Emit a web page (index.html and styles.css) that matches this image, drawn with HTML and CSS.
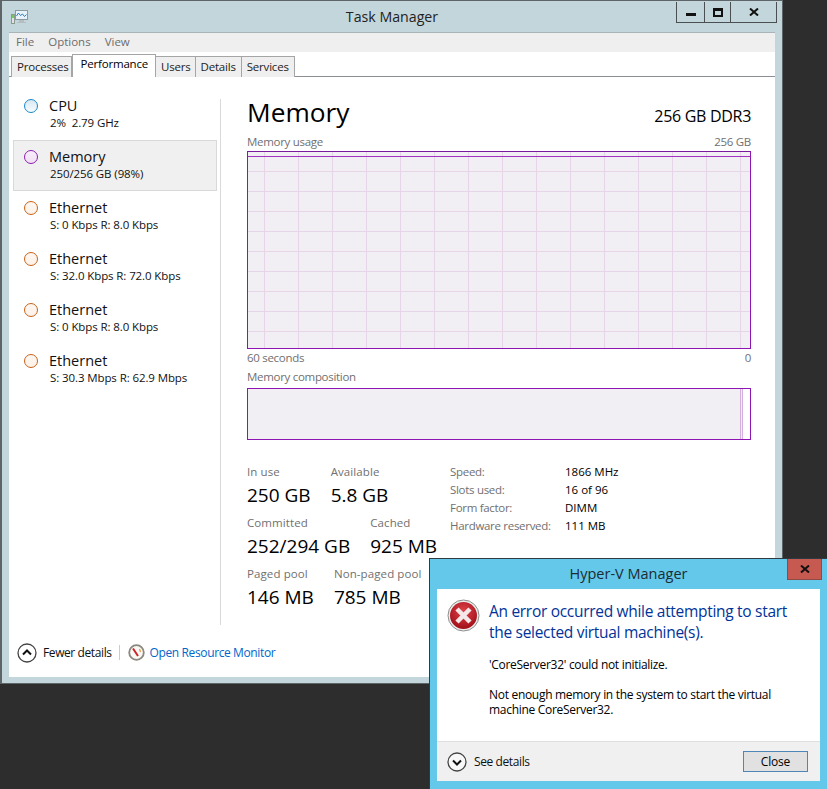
FILE: index.html
```html
<!DOCTYPE html>
<html>
<head>
    <title>Task Manager</title>
    <link rel="stylesheet" href="styles.css">
</head>
<body>
    <div class="window">
        <div class="titlebar">
            <svg class="app-icon" width="17" height="15" viewBox="0 0 17 15">
                <rect x="4.500" y="0.500" width="12" height="9" fill="#e8f2f8" stroke="#8a9aa5"/>
                <path d="M5.500 6l2-3 2 2.500 2-1.500 2 2.500 2-2" fill="none" stroke="#2a7fc0"/>
                <rect x="0.500" y="4.500" width="3" height="9" fill="#dfe5e5" stroke="#8a9a90"/>
                <rect x="1" y="5" width="2" height="3" fill="#6fce5a"/>
                <path d="M8 10h5v2h2v1H6v-1h2z" fill="#b3bdc2"/>
            </svg>
            <div class="window-title">Task Manager</div>
            <div class="caption-buttons">
                <div class="caption-btn min"><span class="min-glyph"></span></div>
                <div class="caption-btn max"><span class="max-glyph"></span></div>
                <div class="caption-btn close">
                    <svg width="10" height="8" viewBox="0 0 10 8"><path d="M1 .5l8 7M9 .5l-8 7" fill="none" stroke="#111" stroke-width="2"/></svg>
                </div>
            </div>
        </div>

        <div class="client">
            <div class="menu">
                <span class="menu-item">File</span>
                <span class="menu-item">Options</span>
                <span class="menu-item">View</span>
            </div>
            <div class="tabs">
                <div class="tab">Processes</div>
                <div class="tab active">Performance</div>
                <div class="tab">Users</div>
                <div class="tab">Details</div>
                <div class="tab">Services</div>
            </div>

            <div class="main">
                <div class="sidebar">
                    <div class="side-item">
                        <span class="dot blue"></span>
                        <div>
                            <div class="side-name">CPU</div>
                            <div class="side-sub">2%&nbsp; 2.79 GHz</div>
                        </div>
                    </div>
                    <div class="side-item selected">
                        <span class="dot purple"></span>
                        <div>
                            <div class="side-name">Memory</div>
                            <div class="side-sub">250/256 GB (98%)</div>
                        </div>
                    </div>
                    <div class="side-item">
                        <span class="dot orange"></span>
                        <div>
                            <div class="side-name">Ethernet</div>
                            <div class="side-sub">S: 0 Kbps R: 8.0 Kbps</div>
                        </div>
                    </div>
                    <div class="side-item">
                        <span class="dot orange"></span>
                        <div>
                            <div class="side-name">Ethernet</div>
                            <div class="side-sub">S: 32.0 Kbps R: 72.0 Kbps</div>
                        </div>
                    </div>
                    <div class="side-item">
                        <span class="dot orange"></span>
                        <div>
                            <div class="side-name">Ethernet</div>
                            <div class="side-sub">S: 0 Kbps R: 8.0 Kbps</div>
                        </div>
                    </div>
                    <div class="side-item">
                        <span class="dot orange"></span>
                        <div>
                            <div class="side-name">Ethernet</div>
                            <div class="side-sub">S: 30.3 Mbps R: 62.9 Mbps</div>
                        </div>
                    </div>
                </div>

                <div class="detail">
                    <div class="detail-head">
                        <div class="detail-title">Memory</div>
                        <div class="detail-type">256 GB DDR3</div>
                    </div>
                    <div class="chart-label usage">
                        <span>Memory usage</span>
                        <span>256 GB</span>
                    </div>
                    <div class="chart"><div class="chart-grid"></div></div>
                    <div class="chart-label axis">
                        <span>60 seconds</span>
                        <span>0</span>
                    </div>
                    <div class="chart-label comp-label">
                        <span>Memory composition</span>
                    </div>
                    <div class="composition">
                        <div class="comp-used"></div>
                        <div class="comp-mod"></div>
                        <div class="comp-free"></div>
                    </div>

                    <div class="stats">
                        <div class="stats-left">
                            <div class="stat-row">
                                <div><div class="stat-label">In use</div><div class="stat-value">250 GB</div></div>
                                <div><div class="stat-label">Available</div><div class="stat-value">5.8 GB</div></div>
                            </div>
                            <div class="stat-row">
                                <div><div class="stat-label">Committed</div><div class="stat-value">252/294 GB</div></div>
                                <div><div class="stat-label">Cached</div><div class="stat-value">925 MB</div></div>
                            </div>
                            <div class="stat-row">
                                <div><div class="stat-label">Paged pool</div><div class="stat-value">146 MB</div></div>
                                <div><div class="stat-label">Non-paged pool</div><div class="stat-value">785 MB</div></div>
                            </div>
                        </div>
                        <div class="spec-table">
                            <span class="spec-label">Speed:</span><span class="spec-value">1866 MHz</span>
                            <span class="spec-label">Slots used:</span><span class="spec-value">16 of 96</span>
                            <span class="spec-label">Form factor:</span><span class="spec-value">DIMM</span>
                            <span class="spec-label">Hardware reserved:</span><span class="spec-value">111 MB</span>
                        </div>
                    </div>
                </div>
            </div>

            <div class="footer">
                <svg class="round-icon" width="20" height="20" viewBox="0 0 20 20">
                    <circle cx="10" cy="10" r="9" fill="#fff" stroke="#444" stroke-width="1.300"/>
                    <path d="M6 11.500l4-4 4 4" fill="none" stroke="#111" stroke-width="2"/>
                </svg>
                <span class="footer-text">Fewer details</span>
                <span class="footer-sep"></span>
                <svg class="monitor-icon" width="17" height="17" viewBox="0 0 17 17">
                    <circle cx="8.500" cy="8.500" r="7.300" fill="#faf8f4" stroke="#8b8880" stroke-width="1.800"/>
                    <path d="M5 4.500l5 7.500" stroke="#c8242a" stroke-width="2"/>
                    <path d="M11.500 5l1 3" stroke="#e8973a" stroke-width="1.200"/>
                </svg>
                <span class="footer-link">Open Resource Monitor</span>
            </div>
        </div>
    </div>

    <div class="dialog">
        <div class="dialog-bar">
            <div class="dialog-title">Hyper-V Manager</div>
            <div class="dialog-close">
                <svg width="10" height="8" viewBox="0 0 10 8"><path d="M1 .5l8 7M9 .5l-8 7" fill="none" stroke="#111" stroke-width="2"/></svg>
            </div>
        </div>
        <div class="dialog-client">
            <div class="dialog-body">
                <svg class="error-icon" width="33" height="33" viewBox="0 0 33 33">
                    <defs>
                        <radialGradient id="errFill" cx="50%" cy="35%" r="65%">
                            <stop offset="0" stop-color="#e0444c"/>
                            <stop offset="1" stop-color="#a10f18"/>
                        </radialGradient>
                    </defs>
                    <circle cx="16.500" cy="16.500" r="15.500" fill="#eeeeee" stroke="#8e8e8e"/>
                    <circle cx="16.500" cy="16.500" r="13.500" fill="url(#errFill)"/>
                    <path d="M10 10l13 13M23 10L10 23" stroke="#f4e8e8" stroke-width="4.500"/>
                </svg>
                <div class="dialog-text">
                    <div class="dialog-heading">An error occurred while attempting to start the selected virtual machine(s).</div>
                    <p class="dialog-msg">'CoreServer32' could not initialize.</p>
                    <p class="dialog-msg">Not enough memory in the system to start the virtual machine CoreServer32.</p>
                </div>
            </div>
            <div class="dialog-footer">
                <svg class="round-icon" width="20" height="20" viewBox="0 0 20 20">
                    <circle cx="10" cy="10" r="9" fill="#f8f8f8" stroke="#444" stroke-width="1.300"/>
                    <path d="M6 8.500l4 4 4-4" fill="none" stroke="#111" stroke-width="2"/>
                </svg>
                <span class="footer-text">See details</span>
                <div class="close-button">Close</div>
            </div>
        </div>
    </div>
</body>
</html>
```

FILE: styles.css
```css
body {
    margin: 0;
    width: 827px;
    height: 789px;
    overflow: hidden;
    position: relative;
    background-color: #2d2d2d;
    font-family: "Open Sans", sans-serif;
    font-size: 12px;
    color: #000000;
}

.window {
    width: 783px;
    height: 684px;
    box-sizing: border-box;
    border: 1px solid #5e6569;
    border-left-width: 2px;
    background-color: #c3d6dc;
    display: flex;
    flex-direction: column;
}

.titlebar {
    height: 31px;
    flex: none;
    display: flex;
    align-items: flex-start;
    position: relative;
}

.app-icon {
    margin: 9px 0 0 9px;
}

.window-title {
    position: absolute;
    left: 0;
    right: 0;
    top: 6px;
    text-align: center;
    font-size: 14.200px;
    color: #222222;
}

.caption-buttons {
    position: absolute;
    top: 1px;
    right: 5px;
    display: flex;
    height: 20px;
    border: 1px solid #4a4f52;
    border-top: none;
}

.caption-btn {
    display: flex;
    align-items: center;
    justify-content: center;
    border-left: 1px solid #4a4f52;
}

.caption-btn:first-child {
    border-left: none;
}

.caption-btn.min { width: 27px; }
.caption-btn.max { width: 25px; }
.caption-btn.close { width: 45px; }

.min-glyph {
    width: 10px;
    height: 3px;
    margin-top: 5px;
    background-color: #111111;
}

.max-glyph {
    width: 6px;
    height: 4px;
    border: 2px solid #111111;
    border-top-width: 3px;
}

.client {
    flex: 1;
    margin: 0 7px 6px 7px;
    background-color: #ffffff;
    border-top: 1px solid #a9b4b9;
    display: flex;
    flex-direction: column;
    min-height: 0;
}

.menu {
    height: 19px;
    flex: none;
    box-sizing: border-box;
    padding: 0 0 2px 7px;
    background-color: #efefef;
    display: flex;
    align-items: center;
    gap: 14px;
    font-size: 11.500px;
}

.menu-item {
    color: #6d6d6d;
}

.tabs {
    height: 25px;
    flex: none;
    box-sizing: border-box;
    border-bottom: 1px solid #8b8f94;
    display: flex;
    align-items: flex-end;
    padding-left: 2px;
    background-color: #ffffff;
    font-size: 11.500px;
    letter-spacing: -0.2px;
}

.tab {
    height: 21px;
    box-sizing: border-box;
    border: 1px solid #a5a5a5;
    border-bottom: none;
    border-left: none;
    background-color: #efefef;
    padding: 0 5px;
    line-height: 19px;
    margin-bottom: -1px;
    color: #222222;
}

.tab:first-child {
    border-left: 1px solid #a5a5a5;
    padding-right: 2px;
}

.tab.active {
    height: 23px;
    line-height: 18px;
    background-color: #ffffff;
    border-left: 1px solid #a5a5a5;
    padding: 0 7px 0 8px;
    color: #000000;
}

.tab.active + .tab {
    border-left: none;
    padding-right: 4px;
}

.main {
    flex: 1;
    display: flex;
    padding: 12px 24px 0 4px;
    min-height: 0;
}

.sidebar {
    width: 206px;
    height: 536px;
    flex: none;
    margin-right: 28px;
    position: relative;
}

.sidebar::after {
    content: "";
    position: absolute;
    top: 10px;
    bottom: 0;
    right: -2px;
    width: 1px;
    background-color: #d9d9d9;
}

.side-item {
    height: 51px;
    width: 204px;
    box-sizing: border-box;
    display: flex;
    padding: 6px 0 0 10px;
    border: 1px solid transparent;
}

.side-item.selected {
    background-color: #f0f0f0;
    border-color: #d9d9d9;
}

.dot {
    width: 12px;
    height: 12px;
    border-radius: 50%;
    margin: 3px 11px 0 0;
    flex: none;
    border: 1px solid;
}

.dot.blue { border-color: #1a88c9; background: linear-gradient(#d9e9f3, #f7fbfd); }
.dot.purple { border-color: #8b1fb0; background: linear-gradient(#f7eef9, #f1e0f5); }
.dot.orange { border-color: #c8621a; background: linear-gradient(#fdf7f1, #fdf2e8); }

.side-name {
    font-size: 14.500px;
    line-height: 19px;
    color: #111111;
}

.side-sub {
    font-size: 11.500px;
    line-height: 14px;
    margin: 1px 0 0 1px;
    letter-spacing: -0.1px;
    color: #111111;
    white-space: nowrap;
}

.detail {
    flex: 1;
    min-width: 0;
}

.detail-head {
    display: flex;
    justify-content: space-between;
    align-items: flex-start;
    box-sizing: border-box;
    height: 45px;
    padding-top: 7px;
}

.detail-title {
    font-size: 26.300px;
    line-height: 33px;
}

.detail-type {
    font-size: 16px;
    line-height: 22px;
    letter-spacing: -0.3px;
    margin-top: 9px;
}

.chart-label {
    display: flex;
    justify-content: space-between;
    font-size: 11.500px;
    line-height: 15px;
    letter-spacing: -0.3px;
    color: #707070;
    height: 15px;
}

.chart-label.usage {
    margin-bottom: 2px;
}

.chart-label.axis {
    margin-top: 1px;
}

.chart-label.comp-label {
    margin-top: 4px;
}

.chart {
    height: 198px;
    box-sizing: border-box;
    border: 1px solid #8e14b4;
    border-top-color: #7a1a9c;
    background-color: #f1eff4;
}

.chart-grid {
    height: 100%;
    background-image:
        linear-gradient(#a033c0, #a033c0),
        linear-gradient(#e6d4e8 1px, transparent 1px),
        linear-gradient(to right, #e6d4e8 1px, transparent 1px);
    background-size: 100% 1px, 100% 20px, 34px 100%;
    background-repeat: no-repeat, repeat-y, repeat-x;
    background-position: 0 4px, 0 19px, 16px 0;
}

.composition {
    height: 52px;
    margin-top: 4px;
    box-sizing: border-box;
    border: 1px solid #8e14b4;
    background-color: #f1eff4;
    display: flex;
}

.comp-used {
    flex: 1;
    border-right: 1px solid #d3b0e0;
}

.comp-mod {
    width: 1px;
    border-right: 1px solid #d3b0e0;
}

.comp-free {
    width: 7px;
    background-color: #ffffff;
}

.stats {
    display: flex;
    margin-top: 24px;
}

.stats-left {
    width: 203px;
    flex: none;
}

.stat-row {
    display: flex;
    gap: 20px;
    height: 51px;
    white-space: nowrap;
}

.stat-label {
    font-size: 11.500px;
    line-height: 16px;
    letter-spacing: 0.1px;
    color: #707070;
}

.stat-value {
    font-size: 19px;
    line-height: 24px;
    margin-top: 3px;
}

.spec-table {
    display: grid;
    grid-template-columns: 115px auto;
    grid-auto-rows: 18px;
    align-content: start;
    line-height: 16px;
    font-size: 11.500px;
    white-space: nowrap;
}

.spec-label {
    color: #707070;
    letter-spacing: -0.3px;
}

.footer {
    height: 47px;
    flex: none;
    box-sizing: border-box;
    padding: 0 0 2px 8px;
    display: flex;
    align-items: center;
}

.footer-text {
    margin-left: 6px;
    color: #111111;
    letter-spacing: -0.4px;
}

.footer-sep {
    width: 1px;
    height: 15px;
    background-color: #cccccc;
    margin: 0 8px 0 7px;
}

.footer-link {
    margin-left: 5px;
    color: #0066cc;
    letter-spacing: -0.38px;
}

.dialog {
    position: absolute;
    left: 429px;
    top: 558px;
    width: 398px;
    height: 231px;
    box-sizing: border-box;
    border: 1px solid #2f3a40;
    border-right: none;
    border-bottom: none;
    background-color: #63c8ea;
    padding: 0 7px 8px 7px;
    display: flex;
    flex-direction: column;
}

.dialog-bar {
    height: 30px;
    flex: none;
    position: relative;
    display: flex;
    justify-content: center;
}

.dialog-title {
    font-size: 14.500px;
    line-height: 30px;
    color: #1c2c33;
}

.dialog-close {
    position: absolute;
    top: 0;
    right: -2px;
    width: 33px;
    height: 20px;
    background-color: #c75a50;
    border: 1px solid #8f4a44;
    border-top: none;
    display: flex;
    align-items: center;
    justify-content: center;
}

.dialog-client {
    flex: 1;
    background-color: #ffffff;
    display: flex;
    flex-direction: column;
}

.dialog-body {
    flex: 1;
    display: flex;
    padding: 10px 10px 0 10px;
}

.error-icon {
    margin: 0 9px 0 0;
    flex: none;
}

.dialog-text {
    min-width: 0;
    padding-top: 2px;
}

.dialog-heading {
    font-size: 15.500px;
    line-height: 21px;
    letter-spacing: -0.3px;
    width: 312px;
    color: #003399;
}

.dialog-msg {
    margin: 14px 0 0 0;
    line-height: 15px;
    letter-spacing: -0.3px;
    width: 310px;
}

.dialog-msg + .dialog-msg {
    margin-top: 15px;
}

.dialog-footer {
    height: 40px;
    flex: none;
    box-sizing: border-box;
    border-top: 1px solid #dfdfdf;
    background-color: #f0f0f0;
    display: flex;
    align-items: center;
    padding: 0 12px 0 10px;
}

.dialog-footer .footer-text {
    margin-left: 7px;
}

.close-button {
    margin-left: auto;
    width: 65px;
    height: 21px;
    box-sizing: border-box;
    border: 1px solid #4f86b8;
    background-color: #e1e1e1;
    text-align: center;
    line-height: 19px;
    letter-spacing: -0.2px;
}
```
